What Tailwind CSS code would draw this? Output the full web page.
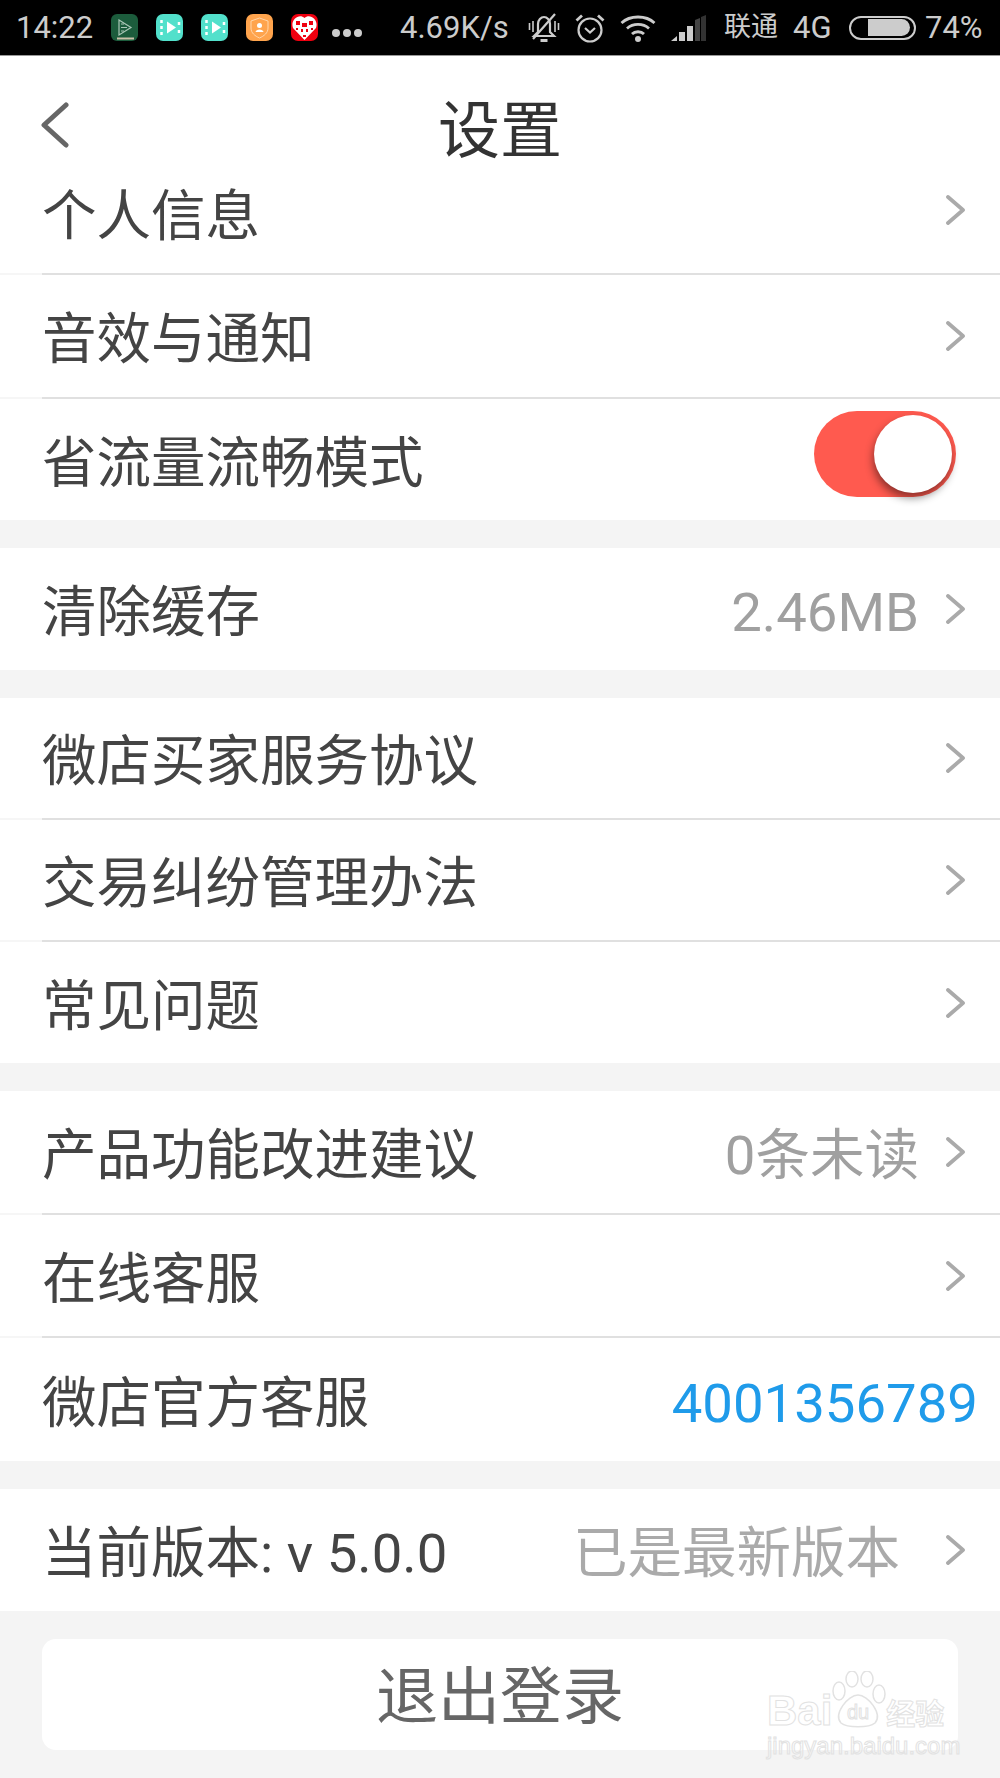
<!DOCTYPE html>
<html lang="zh-CN">
<head>
    <meta charset="UTF-8">
    <meta name="viewport" content="width=device-width, initial-scale=1.0">
    <script src="https://cdn.jsdelivr.net/npm/@tailwindcss/browser@4"></script>
    <title>设置</title>
</head>
<body class="bg-[#f4f4f4] font-['Roboto','Noto_Sans_CJK_SC',sans-serif] text-[54.5px] leading-none text-[#444] w-[1000px] h-[1778px] overflow-hidden relative">

    <!-- status bar -->
    <div class="h-[56px] bg-black border-b border-[#999] flex items-center pl-[16px] text-[31px] text-[#ccc] whitespace-nowrap">
        <span class="w-[95px]">14:22</span>
        <div class="flex items-center gap-[18px]">
            <svg class="w-[27px] h-[27px]" viewBox="0 0 27 27">
                <rect width="27" height="27" rx="6" fill="#1c5c3c"/>
                <rect x="6" y="23.500" width="17" height="2" fill="#c9c0a8"/>
                <path d="M8 6L20 13.500L8 21Z" fill="none" stroke="#a9c6b6" stroke-width="1.200"/>
                <path d="M10 10H13M10 13.500H16M10 17H13" stroke="#a9c6b6" stroke-width="1"/>
            </svg>
            <svg class="w-[27px] h-[27px]" viewBox="0 0 27 27">
                <rect width="27" height="27" rx="7" fill="#52e0cb"/>
                <path d="M11 7.500L20 13.500L11 19.500Z" fill="#fff"/>
                <path d="M5.500 6V9M5.500 12V15M5.500 18V21M23 8V11M23 16V19" stroke="#fff" stroke-width="2.500"/>
            </svg>
            <svg class="w-[27px] h-[27px]" viewBox="0 0 27 27">
                <rect width="27" height="27" rx="7" fill="#52e0cb"/>
                <path d="M11 7.500L20 13.500L11 19.500Z" fill="#fff"/>
                <path d="M5.500 6V9M5.500 12V15M5.500 18V21M23 8V11M23 16V19" stroke="#fff" stroke-width="2.500"/>
            </svg>
            <svg class="w-[27px] h-[27px]" viewBox="0 0 27 27">
                <rect width="27" height="27" rx="7" fill="#ffa44d"/>
                <path d="M13.500 4L22 7V14C22 19 18 22 13.500 24C9 22 5 19 5 14V7Z" fill="none" stroke="#ffd6ab" stroke-width="1"/>
                <circle cx="13.500" cy="11.500" r="2.500" fill="#fff"/>
                <path d="M9.500 18C10 14.500 17 14.500 17.500 18Z" fill="#fff"/>
            </svg>
            <svg class="w-[27px] h-[27px]" viewBox="0 0 27 27">
                <rect width="27" height="27" rx="7" fill="#f00010"/>
                <path d="M13.500 26L2 14C-1 6 8 -1 13.500 4C19 -1 28 6 25 14Z" fill="#fff"/>
                <path d="M5 7H9V11H5ZM18 7H22V11H18ZM10 15H12V18H10ZM15 15H17V18H15ZM12 21H15V23H12ZM11 9H16V13H11ZM5 14H7V16H5ZM20 14H22V16H20Z" fill="#f00010"/>
            </svg>
            <div class="flex gap-[3px] mt-[10px] -ml-[4px]">
                <span class="w-[8px] h-[8px] rounded-full bg-[#ccc]"></span>
                <span class="w-[8px] h-[8px] rounded-full bg-[#ccc]"></span>
                <span class="w-[8px] h-[8px] rounded-full bg-[#ccc]"></span>
            </div>
        </div>
        <span class="ml-[38px] w-[128px]">4.69K/s</span>
        <div class="flex items-center gap-[15px]">
            <svg class="w-[32px] h-[32px]" viewBox="0 0 32 32" fill="none" stroke="#ccc" stroke-width="2.200">
                <path d="M6 24L10 20V12C10 8 13 5 16 5C19 5 22 8 22 12V20L26 24Z"/>
                <path d="M12.500 28.500H19.500" stroke-width="3"/>
                <path d="M5 27L27 2"/>
                <path d="M1.500 11V18M30.500 11V18M5 9V20M27 9V20" stroke-width="1.600"/>
            </svg>
            <svg class="w-[30px] h-[30px]" viewBox="0 0 30 30" fill="none" stroke="#ccc" stroke-width="2.200">
                <circle cx="15" cy="17" r="11.500"/>
                <path d="M10 15L15 19.500L20 15"/>
                <path d="M1.500 7.500L7 2.500M28.500 7.500L23 2.500" stroke-width="2.800"/>
            </svg>
            <svg class="w-[36px] h-[28px]" viewBox="0 0 36 28" fill="none" stroke="#ccc" stroke-width="2.800">
                <path d="M1.500 9C10 1 26 1 34.500 9"/>
                <path d="M7 14.500C13 9 23 9 29 14.500"/>
                <path d="M12 20C15 17 21 17 24 20"/>
                <circle cx="18" cy="25" r="3" fill="#ccc" stroke="none"/>
            </svg>
            <svg class="w-[36px] h-[26px]" viewBox="0 0 36 26">
                <path d="M0 26L6 21V26Z" fill="#ccc"/>
                <rect x="8" y="17" width="6" height="9" fill="#ccc"/>
                <rect x="16" y="11" width="6" height="15" fill="#ccc"/>
                <path d="M24 5L29 3V26H24Z" fill="#444"/>
                <path d="M30 2L35 0V26H30Z" fill="#333"/>
            </svg>
        </div>
        <span class="ml-[17px] text-[27px]">联通</span>
        <span class="ml-[15px] w-[56px]">4G</span>
        <div class="w-[67px] h-[24px] border-2 border-[#ccc] rounded-full flex items-center pl-[17px]">
            <div class="w-[42px] h-[17px] bg-[#ccc] rounded-r-full"></div>
        </div>
        <span class="ml-[9px]">74%</span>
    </div>

    <!-- title bar, the first row scrolls up under it -->
    <div class="h-[130px] bg-white relative flex justify-center pt-[45px]">
        <svg class="absolute left-[39px] top-[46px] w-[30px] h-[46px]" viewBox="0 0 30 46" fill="none" stroke="#666" stroke-width="5" stroke-linecap="round" stroke-linejoin="round">
            <path d="M27 3L5 23L27 43"/>
        </svg>
        <span class="text-[62px] text-[#333]">设置</span>
    </div>

    <div class="bg-white">
        <div class="h-[87px] flex items-center justify-between pl-[42px] pr-[34px] pb-[39px]">
            <span class="mt-[13px]">个人信息</span>
            <svg class="w-[20px] h-[30px]" viewBox="0 0 20 30" fill="none" stroke="#aaa" stroke-width="3.800" stroke-linecap="round" stroke-linejoin="round"><path d="M2 2L17 15L2 28"/></svg>
        </div>
        <div class="h-[2px] pl-[42px] bg-[#f6f6f6]"><div class="h-full bg-[#e0e0e0]"></div></div>
        <div class="h-[122px] flex items-center justify-between pl-[42px] pr-[34px]">
            <span class="mt-[7px]">音效与通知</span>
            <svg class="w-[20px] h-[30px]" viewBox="0 0 20 30" fill="none" stroke="#aaa" stroke-width="3.800" stroke-linecap="round" stroke-linejoin="round"><path d="M2 2L17 15L2 28"/></svg>
        </div>
        <div class="h-[2px] pl-[42px] bg-[#f6f6f6]"><div class="h-full bg-[#e0e0e0]"></div></div>
        <div class="h-[121px] flex items-center justify-between pl-[42px] pr-[44px]">
            <span class="mt-[7px]">省流量流畅模式</span>
            <div class="w-[142px] h-[86px] mb-[12px] rounded-full bg-[#ff5a4f] relative">
                <div class="absolute right-[4px] top-[4px] w-[78px] h-[78px] rounded-full bg-white shadow-[-1px_5px_8px_rgba(0,0,0,0.45)]"></div>
            </div>
        </div>
    </div>

    <div class="mt-[28px] bg-white">
        <div class="h-[122px] flex items-center pl-[42px] pr-[34px]">
            <span class="mt-[7px]">清除缓存</span>
            <span class="mt-[7px] ml-auto text-[#a0a0a0] mr-[27px]">2.46MB</span>
            <svg class="w-[20px] h-[30px]" viewBox="0 0 20 30" fill="none" stroke="#aaa" stroke-width="3.800" stroke-linecap="round" stroke-linejoin="round"><path d="M2 2L17 15L2 28"/></svg>
        </div>
    </div>

    <div class="mt-[28px] bg-white">
        <div class="h-[120px] flex items-center justify-between pl-[42px] pr-[34px]">
            <span class="mt-[7px]">微店买家服务协议</span>
            <svg class="w-[20px] h-[30px]" viewBox="0 0 20 30" fill="none" stroke="#aaa" stroke-width="3.800" stroke-linecap="round" stroke-linejoin="round"><path d="M2 2L17 15L2 28"/></svg>
        </div>
        <div class="h-[2px] pl-[42px] bg-[#f6f6f6]"><div class="h-full bg-[#e0e0e0]"></div></div>
        <div class="h-[120px] flex items-center justify-between pl-[42px] pr-[34px]">
            <span class="mt-[7px]">交易纠纷管理办法</span>
            <svg class="w-[20px] h-[30px]" viewBox="0 0 20 30" fill="none" stroke="#aaa" stroke-width="3.800" stroke-linecap="round" stroke-linejoin="round"><path d="M2 2L17 15L2 28"/></svg>
        </div>
        <div class="h-[2px] pl-[42px] bg-[#f6f6f6]"><div class="h-full bg-[#e0e0e0]"></div></div>
        <div class="h-[121px] flex items-center justify-between pl-[42px] pr-[34px]">
            <span class="mt-[7px]">常见问题</span>
            <svg class="w-[20px] h-[30px]" viewBox="0 0 20 30" fill="none" stroke="#aaa" stroke-width="3.800" stroke-linecap="round" stroke-linejoin="round"><path d="M2 2L17 15L2 28"/></svg>
        </div>
    </div>

    <div class="mt-[28px] bg-white">
        <div class="h-[122px] flex items-center pl-[42px] pr-[34px]">
            <span class="mt-[7px]">产品功能改进建议</span>
            <span class="mt-[7px] ml-auto text-[#a0a0a0] mr-[27px]">0条未读</span>
            <svg class="w-[20px] h-[30px]" viewBox="0 0 20 30" fill="none" stroke="#aaa" stroke-width="3.800" stroke-linecap="round" stroke-linejoin="round"><path d="M2 2L17 15L2 28"/></svg>
        </div>
        <div class="h-[2px] pl-[42px] bg-[#f6f6f6]"><div class="h-full bg-[#e0e0e0]"></div></div>
        <div class="h-[121px] flex items-center justify-between pl-[42px] pr-[34px]">
            <span class="mt-[7px]">在线客服</span>
            <svg class="w-[20px] h-[30px]" viewBox="0 0 20 30" fill="none" stroke="#aaa" stroke-width="3.800" stroke-linecap="round" stroke-linejoin="round"><path d="M2 2L17 15L2 28"/></svg>
        </div>
        <div class="h-[2px] pl-[42px] bg-[#f6f6f6]"><div class="h-full bg-[#e0e0e0]"></div></div>
        <div class="h-[123px] flex items-center justify-between pl-[42px] pr-[22px]">
            <span class="mt-[7px]">微店官方客服</span>
            <span class="mt-[7px] text-[#1f9bea]">4001356789</span>
        </div>
    </div>

    <div class="mt-[28px] bg-white">
        <div class="h-[122px] flex items-center pl-[42px] pr-[34px]">
            <span class="mt-[7px]">当前版本: v 5.0.0</span>
            <span class="mt-[7px] ml-auto text-[#aaa] mr-[46px]">已是最新版本</span>
            <svg class="w-[20px] h-[30px]" viewBox="0 0 20 30" fill="none" stroke="#aaa" stroke-width="3.800" stroke-linecap="round" stroke-linejoin="round"><path d="M2 2L17 15L2 28"/></svg>
        </div>
    </div>

    <div class="mx-[42px] mt-[28px] h-[111px] bg-white rounded-[14px] flex items-center justify-center text-[62px] text-[#666]">
        <span class="mt-[6px]">退出登录</span>
    </div>

    <!-- watermark -->
    <div class="absolute left-[767px] top-[1671px] w-[180px] text-transparent [-webkit-text-stroke:1px_#e2e2e2]">
        <div class="flex items-end h-[57px] font-['Liberation_Sans',sans-serif]">
            <span class="text-[42px] font-bold leading-[34px]">Bai</span>
            <svg class="w-[56px] h-[57px] -ml-[2px]" viewBox="0 0 56 57" fill="none" stroke="#e2e2e2" stroke-width="1.500">
                <ellipse cx="9" cy="20" rx="6" ry="9"/>
                <ellipse cx="22" cy="8" rx="6" ry="8"/>
                <ellipse cx="37" cy="8" rx="6" ry="8"/>
                <ellipse cx="49" cy="23" rx="6" ry="9"/>
                <path d="M28 24C18 24 3 43 11 52C17 57 39 57 45 52C53 43 38 24 28 24Z"/>
                <text x="28" y="48" text-anchor="middle" font-size="20" font-family="Liberation Sans" stroke-width="1">du</text>
            </svg>
            <span class="text-[29px] leading-[32px] font-['Noto_Sans_CJK_SC',sans-serif] font-bold">经验</span>
        </div>
        <div class="text-[24px] leading-[28px] mt-[4px] whitespace-nowrap font-['Liberation_Sans',sans-serif]">jingyan.baidu.com</div>
    </div>

</body>
</html>
